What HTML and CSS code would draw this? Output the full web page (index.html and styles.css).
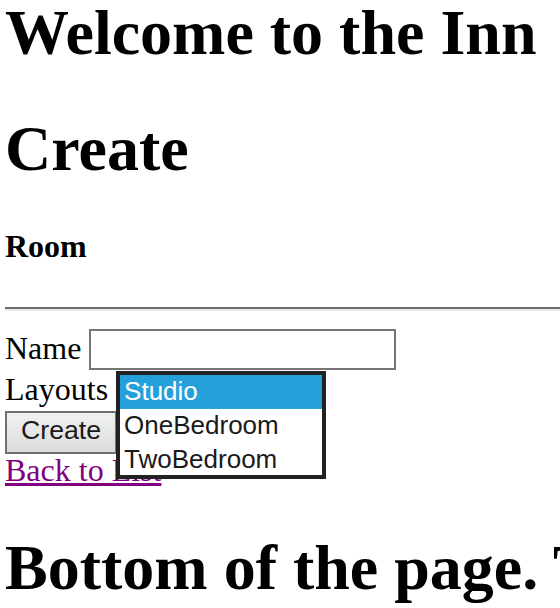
FILE: index.html
```html
<!DOCTYPE html>
<html lang="en">
<head>
<meta charset="utf-8">
<title>Create - Welcome to the Inn</title>
<link rel="stylesheet" href="styles.css">
</head>
<body>
<h1 class="title title-first">Welcome to the Inn</h1>
<h1 class="title">Create</h1>
<form class="room-form">
  <h4 class="section">Room</h4>
  <hr class="rule">
  <div class="field field-name">
    <label class="field-label" for="name">Name</label>
    <input class="text-input" id="name" type="text">
  </div>
  <div class="field field-layouts">
    <label class="field-label">Layouts</label>
    <span class="select-wrap">
      <span class="select-box"></span>
      <div class="popup" role="listbox">
        <div class="option option-selected" role="option">Studio</div>
        <div class="option" role="option">OneBedroom</div>
        <div class="option" role="option">TwoBedroom</div>
      </div>
    </span>
  </div>
  <div class="actions">
    <button class="btn" type="button">Create</button>
  </div>
</form>
<div class="back-row"><a class="back-link" href="#">Back to List</a></div>
<h1 class="title title-bottom">Bottom of the page. This is the end.</h1>
</body>
</html>
```

FILE: styles.css
```css
html, body {
  background: #ffffff;
}

body {
  margin: 0;
  padding: 0 0 0 5px;
  font-family: "Liberation Serif", "Times New Roman", serif;
  font-size: 32px;
  color: #000000;
  overflow: hidden;
  height: 608px;
}

.title {
  font-size: 64px;
  font-weight: bold;
  line-height: 74px;
  margin: 42px 0;
  white-space: nowrap;
}

.title-first {
  margin-top: -4px;
}

.title-bottom {
  margin-top: 43px;
}

.room-form {
  margin: 0;
}

.section {
  font-size: 32px;
  font-weight: bold;
  line-height: 37px;
  margin: 42px 0 42px;
}

.rule {
  margin: 0 0 16px;
  height: 0;
  border: 0;
  border-top: 2px solid #6e6e6e;
  border-bottom: 2px solid #e9e9e9;
}

.field {
  display: flex;
  align-items: flex-start;
  gap: 8px;
}

.field-label {
  line-height: 37px;
}

.field-name {
  height: 43px;
}

.field-name .field-label {
  margin-top: 3px;
}

.text-input {
  box-sizing: border-box;
  width: 307px;
  height: 41px;
  margin: 2px 0 0;
  padding: 0 4px;
  border: 2px solid #767676;
  background: #ffffff;
  font-family: "Liberation Sans", Arial, sans-serif;
  font-size: 26.67px;
}

.field-layouts {
  height: 40px;
}

.field-layouts .field-label {
  margin-top: 1px;
}

.select-wrap {
  position: relative;
  display: block;
}

.select-box {
  display: block;
  box-sizing: border-box;
  width: 210px;
  height: 38px;
  margin-top: 2px;
  border: 2px solid #767676;
  background: #ffffff;
}

.popup {
  position: absolute;
  left: 0;
  top: 1px;
  z-index: 5;
  box-sizing: border-box;
  width: 210px;
  height: 108px;
  border: 4px solid #222222;
  background: #ffffff;
  overflow: hidden;
  font-family: "Liberation Sans", Arial, sans-serif;
  font-size: 26px;
  color: #1a1a1a;
}

.option {
  height: 34px;
  box-sizing: border-box;
  padding: 0 0 2px 4px;
  line-height: 32px;
  white-space: nowrap;
}

.option-selected {
  background: #26a0da;
  color: #ffffff;
}

.actions {
  height: 43px;
}

.btn {
  box-sizing: border-box;
  height: 43px;
  margin: 0;
  padding: 0 14px 3px;
  border: 2px solid #707070;
  background: linear-gradient(#f1f1f1, #dcdcdc);
  font-family: "Liberation Sans", Arial, sans-serif;
  font-size: 26.67px;
  color: #1a1a1a;
}

.back-row {
  line-height: 35px;
}

.back-link {
  color: #800080;
  text-decoration: underline;
}
```
